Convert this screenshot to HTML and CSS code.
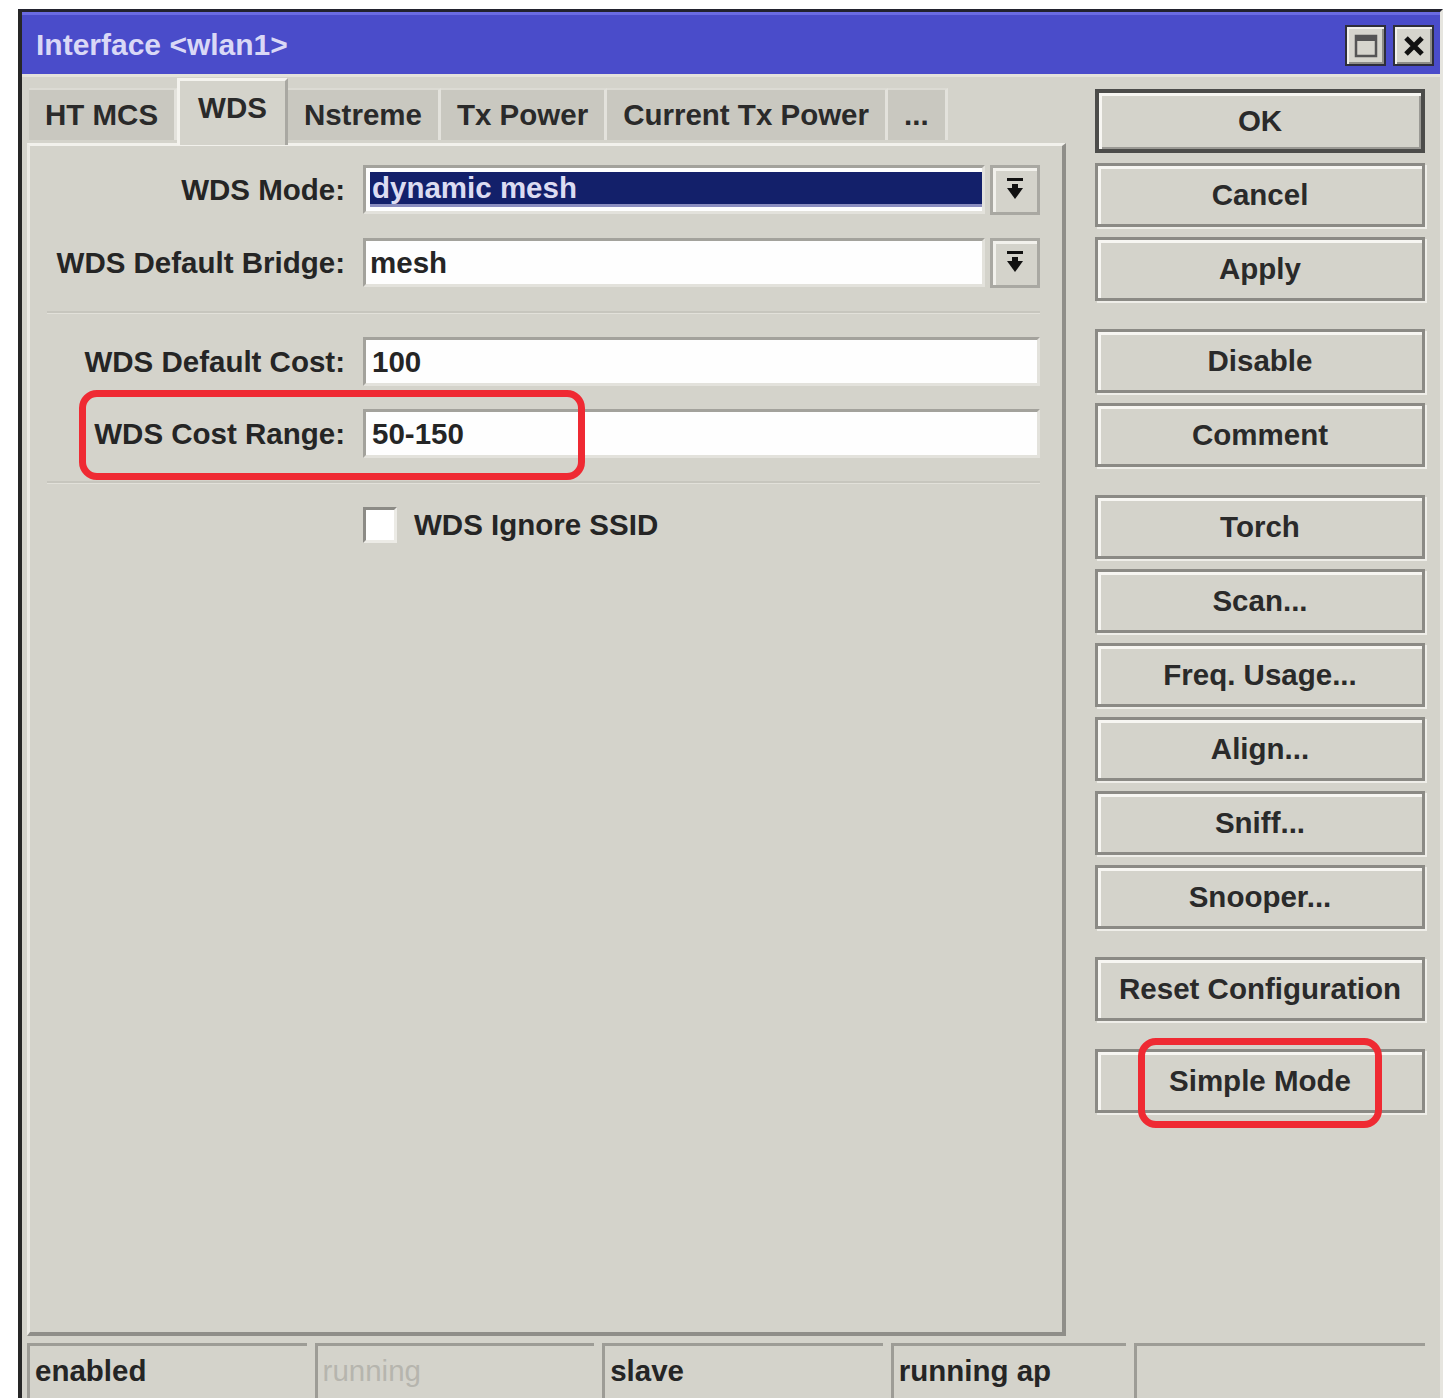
FILE: index.html
```html
<!DOCTYPE html>
<html lang="en">
<head>
<meta charset="utf-8">
<title>Interface &lt;wlan1&gt;</title>
<link rel="stylesheet" href="styles.css">
</head>
<body>
<div class="window">
  <div class="titlebar">
    <span class="title">Interface &lt;wlan1&gt;</span>
    <div class="title-btns">
      <span class="tbtn">
        <svg width="26" height="26" viewBox="0 0 26 26"><rect x="3" y="3" width="20" height="20" fill="none" stroke="#555" stroke-width="2.5"/><rect x="3" y="3" width="20" height="5" fill="#555"/></svg>
      </span>
      <span class="tbtn">
        <svg width="26" height="26" viewBox="0 0 26 26"><path d="M5 5 L21 21 M21 5 L5 21" stroke="#111" stroke-width="5"/></svg>
      </span>
    </div>
  </div>

  <div class="body">
    <div class="main">
      <div class="left">
        <div class="tabs">
          <div class="tab">HT MCS</div>
          <div class="tab active">WDS</div>
          <div class="tab">Nstreme</div>
          <div class="tab">Tx Power</div>
          <div class="tab">Current Tx Power</div>
          <div class="tab">...</div>
        </div>
        <div class="panel">
          <div class="form">
            <div class="lbl">WDS Mode:</div>
            <div class="combo">
              <div class="field"><span class="sel">dynamic mesh</span></div>
              <div class="drop"><svg width="20" height="28" viewBox="0 0 20 28"><rect x="2" y="2" width="16" height="3" fill="#111"/><rect x="7" y="8" width="6" height="6" fill="#111"/><path d="M2 12 H18 L10 23 Z" fill="#111"/></svg></div>
            </div>

            <div class="lbl">WDS Default Bridge:</div>
            <div class="combo">
              <div class="field">mesh</div>
              <div class="drop"><svg width="20" height="28" viewBox="0 0 20 28"><rect x="2" y="2" width="16" height="3" fill="#111"/><rect x="7" y="8" width="6" height="6" fill="#111"/><path d="M2 12 H18 L10 23 Z" fill="#111"/></svg></div>
            </div>

            <div class="sep"></div>

            <div class="lbl">WDS Default Cost:</div>
            <div class="field">100</div>

            <div class="lbl">WDS Cost Range:</div>
            <div class="field">50-150</div>

            <div class="sep"></div>

            <div></div>
            <div class="check"><span class="box"></span><span>WDS Ignore SSID</span></div>
          </div>
        </div>
      </div>

      <div class="buttons">
        <div class="group">
          <div class="btn default">OK</div>
          <div class="btn">Cancel</div>
          <div class="btn">Apply</div>
        </div>
        <div class="group">
          <div class="btn">Disable</div>
          <div class="btn">Comment</div>
        </div>
        <div class="group">
          <div class="btn">Torch</div>
          <div class="btn">Scan...</div>
          <div class="btn">Freq. Usage...</div>
          <div class="btn">Align...</div>
          <div class="btn">Sniff...</div>
          <div class="btn">Snooper...</div>
        </div>
        <div class="group">
          <div class="btn">Reset Configuration</div>
        </div>
        <div class="group">
          <div class="btn">Simple Mode</div>
        </div>
      </div>
    </div>

    <div class="status">
      <div class="cell c1">enabled</div>
      <div class="cell c2 dim">running</div>
      <div class="cell c3">slave</div>
      <div class="cell c4">running ap</div>
      <div class="cell c5"></div>
    </div>
  </div>

  <div class="mark mark-range"></div>
  <div class="mark mark-simple"></div>
</div>
</body>
</html>
```

FILE: styles.css
```css
* { box-sizing: border-box; }

html, body {
  margin: 0;
  height: 1398px;
  overflow: hidden;
  background: #ffffff;
}

body {
  font-family: "Liberation Sans", Arial, sans-serif;
  font-weight: bold;
  font-size: 29.5px;
  color: #252525;
}

/* window frame */
.window {
  position: relative;
  margin: 9px 0 0 18px;
  width: 1425px;
  height: 1400px;
  border-top: 3px solid #22222e;
  border-left: 4px solid #262626;
  border-right: 3px solid #e6e5df;
  background: #d4d3cb;
  overflow: hidden;
}

.titlebar {
  height: 62px;
  background: #4a4cca;
  border-top: 3px solid #6a6be2;
  display: flex;
  align-items: center;
  justify-content: space-between;
  padding: 0 6px 0 14px;
}

.title {
  color: #d9d8f6;
  font-size: 30px;
}

.title-btns {
  display: flex;
  gap: 7px;
  margin-top: 2px;
}

.tbtn {
  width: 41px;
  height: 41px;
  background: #d6d5cd;
  border: 2px solid #2e2e3a;
  box-shadow: inset 2px 2px 0 #f2f1ec, inset -2px -2px 0 #8e8d88;
  display: flex;
  align-items: center;
  justify-content: center;
}

.body {
  border-top: 3px solid #e3e2db;
  padding: 1px 15px 0 5px;
}

.main {
  display: flex;
  gap: 29px;
}

.left {
  width: 1039px;
  display: flex;
  flex-direction: column;
}

/* tabs */
.tabs {
  height: 65px;
  display: flex;
  align-items: flex-end;
  padding-left: 2px;
  position: relative;
  z-index: 1;
}

.tab {
  height: 52px;
  margin-bottom: 3px;
  padding: 0 16px;
  display: flex;
  align-items: center;
  background: #c9c8c0;
  border-top: 2px solid #dcdbd4;
  border-right: 3px solid #e3e2dc;
  color: #2a2a2a;
  white-space: nowrap;
}

.tab.active {
  height: 67px;
  margin-bottom: -2px;
  background: #d4d3cb;
  border-top: 3px solid #f4f3ee;
  border-left: 3px solid #f4f3ee;
  border-right: 3px solid #a9a8a2;
  padding: 0 18px 10px;
}

.tab:first-child { border-left: 0; }

/* tab page */
.panel {
  height: 1193px;
  border-top: 3px solid #f2f1ec;
  border-left: 3px solid #ecebe5;
  border-right: 4px solid #8f8e89;
  border-bottom: 4px solid #8f8e89;
}

.form {
  display: grid;
  grid-template-columns: 315px 1fr;
  column-gap: 18px;
  row-gap: 23px;
  padding: 19px 22px 0 0;
  align-items: center;
}

.lbl {
  text-align: right;
  white-space: nowrap;
}

.field {
  height: 49px;
  background: #fefefe;
  border-top: 3px solid #a3a29c;
  border-left: 3px solid #a3a29c;
  border-bottom: 3px solid #e3e2dc;
  border-right: 3px solid #e3e2dc;
  display: flex;
  align-items: center;
  padding-left: 6px;
  white-space: nowrap;
}

.combo {
  display: flex;
  gap: 5px;
}

.combo .field { flex: 1; padding-left: 4px; }

.sel {
  flex: 1;
  align-self: stretch;
  margin: 4px 0;
  background: #13206a;
  border-bottom: 3px solid #8a8dbf;
  color: #dcdcf2;
  display: flex;
  align-items: center;
  padding-left: 2px;
}

.drop {
  width: 50px;
  height: 50px;
  background: #d4d3cb;
  border: 3px solid #a9a8a2;
  box-shadow: inset 3px 3px 0 #f2f1ec;
  display: flex;
  align-items: center;
  justify-content: center;
}

.sep {
  grid-column: 1 / -1;
  height: 3px;
  margin-left: 17px;
  background: #c7c6be;
  border-bottom: 1px solid #e2e1da;
}

.check {
  display: flex;
  align-items: center;
  gap: 17px;
  height: 36px;
}

.box {
  width: 34px;
  height: 36px;
  background: #ffffff;
  border-top: 3px solid #8c8b86;
  border-left: 3px solid #8c8b86;
  border-bottom: 3px solid #ecebe6;
  border-right: 3px solid #ecebe6;
}

/* command buttons */
.buttons {
  width: 330px;
  padding-top: 11px;
  display: flex;
  flex-direction: column;
  gap: 28px;
}

.group {
  display: flex;
  flex-direction: column;
  gap: 10px;
}

.btn {
  height: 64px;
  border: 3px solid #8b8a85;
  box-shadow: inset 3px 3px 0 #f7f6f2, 2px 2px 0 #efeee9;
  display: flex;
  align-items: center;
  justify-content: center;
  white-space: nowrap;
  color: #2a2a2a;
}

.btn.default {
  border: 4px solid #4c4c4a;
  box-shadow: inset 3px 3px 0 #f7f6f2, inset -2px -2px 0 #9a9994;
}

/* status bar */
.status {
  margin-top: 7px;
  display: flex;
  gap: 8px;
}

.cell {
  height: 60px;
  border-top: 3px solid #9d9c96;
  border-left: 3px solid #9d9c96;
  padding: 8px 0 0 5px;
  white-space: nowrap;
}

.c1 { width: 281px; }
.c2 { width: 281px; }
.c3 { width: 282px; }
.c4 { width: 237px; }
.c5 { width: 292px; }

.dim { color: #b6b5ae; font-weight: normal; }

/* red call-out frames drawn over the dialog */
.mark {
  position: absolute;
  border: 7px solid #ef2a33;
  border-radius: 18px;
  pointer-events: none;
}

.mark-range {
  left: 57px;
  top: 378px;
  width: 506px;
  height: 90px;
}

.mark-simple {
  left: 1116px;
  top: 1026px;
  width: 244px;
  height: 90px;
}
```
